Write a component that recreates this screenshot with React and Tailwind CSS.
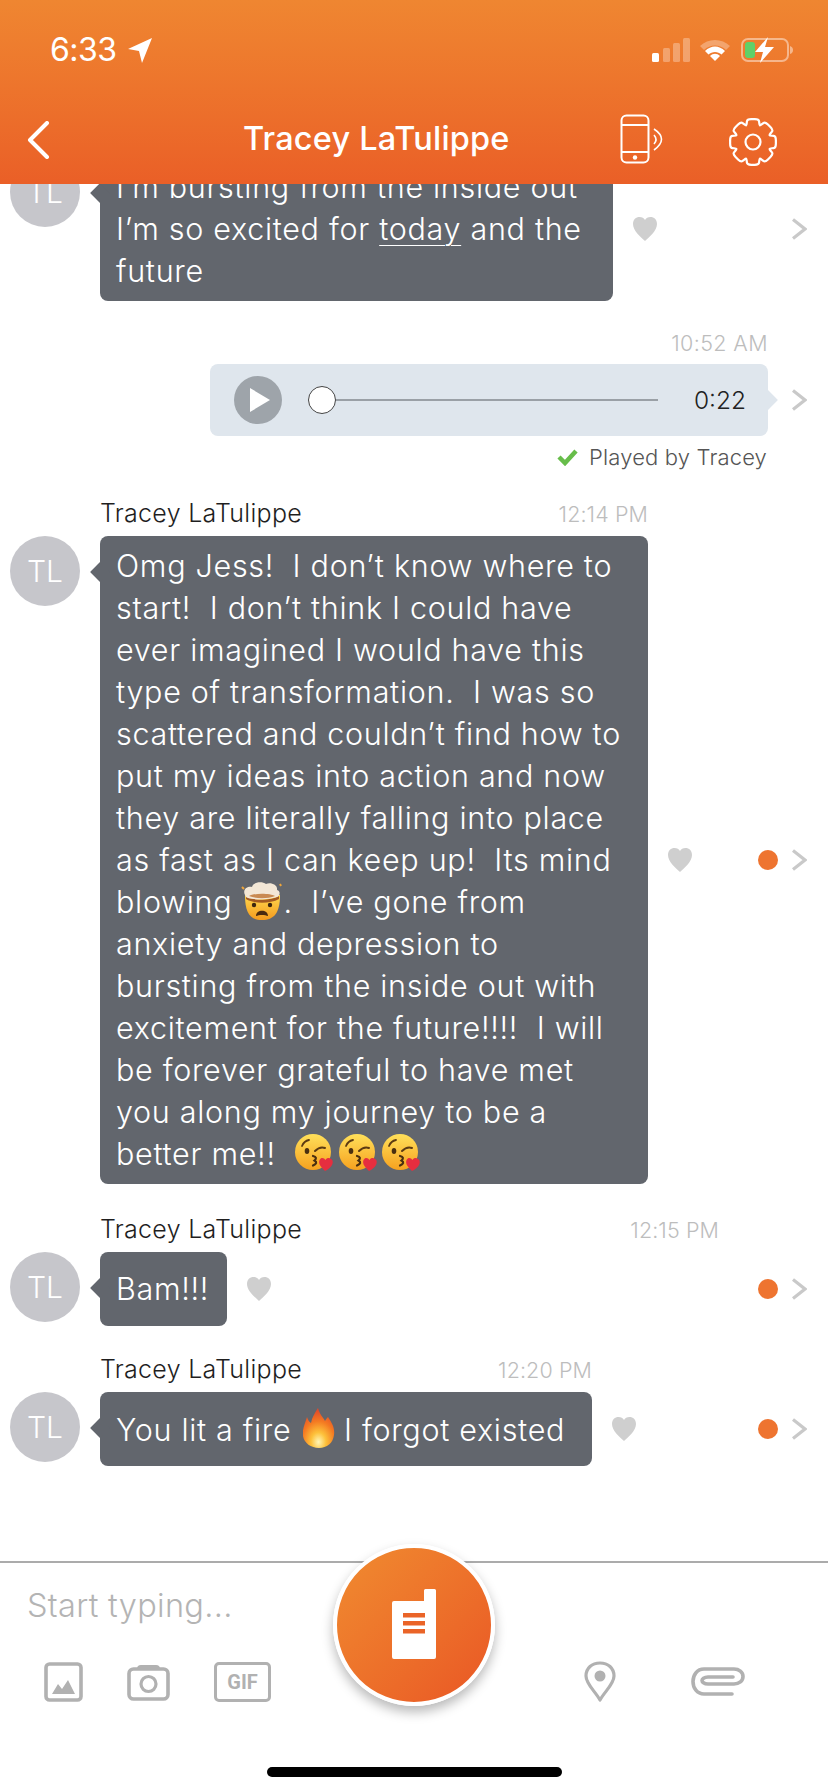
const FONT = "font-['Inter','Lato',sans-serif]";

function Chevron() {
  return (
    <svg width="16" height="22" viewBox="0 0 16 22" className="shrink-0">
      <path d="M2 1.5 L14 11 L2 20.5" fill="none" stroke="#c9c9c9" strokeWidth="3.2" />
    </svg>
  );
}

function Heart() {
  return (
    <svg width="24" height="24" viewBox="0 0 24 24" className="shrink-0">
      <path d="M12 24 C8 20 0 14 0 7 C0 2.5 3 0 6.5 0 C9 0 11 1.2 12 3 C13 1.2 15 0 17.5 0 C21 0 24 2.5 24 7 C24 14 16 20 12 24 Z" fill="#cfcfcf" />
    </svg>
  );
}

function Avatar() {
  return (
    <div className="w-[70px] h-[70px] shrink-0 rounded-full bg-[#c6c6cb] flex items-center justify-center text-white text-[30px] font-light">
      TL
    </div>
  );
}

function KissEmoji() {
  return (
    <svg width="40" height="40" viewBox="0 0 40 40" className="inline-block align-[-8px] mr-[3.5px]">
      <defs>
        <linearGradient id="kissface" x1="0" y1="0" x2="0" y2="1">
          <stop offset="0" stopColor="#ffe05a" />
          <stop offset="1" stopColor="#f6a11f" />
        </linearGradient>
      </defs>
      <circle cx="19" cy="19" r="18" fill="url(#kissface)" />
      <path d="M8 13 q2 -5 7 -6" fill="none" stroke="#5b3a12" strokeWidth="1.800" strokeLinecap="round" />
      <ellipse cx="13" cy="18" rx="2.300" ry="3" fill="#4a2f10" />
      <path d="M21 18 q5 -5 10 -3" fill="none" stroke="#5b3a12" strokeWidth="2" strokeLinecap="round" />
      <path d="M19 23 q5 1.500 1.500 4.500 q4 2.500 -1.500 5" fill="none" stroke="#4a2f10" strokeWidth="2.200" strokeLinecap="round" />
      <path d="M31 38 C27 34 24 31 25.500 27 C27 24 30 24.500 31.500 27 C33 24 37 24.500 38.500 27.500 C40 32 35 36 31 38 Z" fill="#e62e3f" />
    </svg>
  );
}

function MindBlownEmoji() {
  return (
    <svg width="44" height="40" viewBox="0 0 44 40" className="inline-block align-[-8px] -ml-[2px]">
      <defs>
        <linearGradient id="blownface" x1="0" y1="0" x2="0" y2="1">
          <stop offset="0" stopColor="#ffd84e" />
          <stop offset="1" stopColor="#f49a1e" />
        </linearGradient>
      </defs>
      <path d="M5 14 C5 32 10 39 22 39 C34 39 40 32 40 14 Z" fill="url(#blownface)" />
      <path d="M6 15 C14 20 30 20 39 15 L39 18 C30 23 14 23 6 18 Z" fill="#a45a22" />
      <path d="M5 14 C2 8 8 5 12 6 C13 1 22 0 26 3 C31 1 38 4 37 9 C41 10 40 15 37 16 C28 19 14 19 8 17 C6 16.500 5.500 15 5 14 Z" fill="#f3e7d6" />
      <path d="M9 15 C16 18 28 18 35 15 C30 12 14 12 9 15 Z" fill="#c98a52" />
      <circle cx="14" cy="24" r="2.200" fill="#3d2610" />
      <circle cx="30" cy="24" r="2.200" fill="#3d2610" />
      <path d="M16 35 C16 28 28 28 28 35 C25 33.500 19 33.500 16 35 Z" fill="#4a2a10" />
      <path d="M2 6 l2 2 M40 3 l1 2" stroke="#f0a63a" strokeWidth="2" />
    </svg>
  );
}

function FireEmoji() {
  return (
    <svg width="32" height="40" viewBox="0 0 32 40" className="inline-block align-[-7px] ml-[2px]">
      <defs>
        <radialGradient id="firefill" cx="0.5" cy="0.85" r="0.8">
          <stop offset="0" stopColor="#fff6b8" />
          <stop offset="0.3" stopColor="#fdc13a" />
          <stop offset="0.65" stopColor="#f47a22" />
          <stop offset="1" stopColor="#e2492a" />
        </radialGradient>
      </defs>
      <path d="M15 0 C17 7 20 9 22 13 C23 11 24 10 25 9 C29 15 32 20 31 27 C30 35 24 40 16 40 C8 40 1 35 0 28 C-1 21 2 16 4 9 C5 12 6 14 8 15 C9 9 12 5 15 0 Z" fill="url(#firefill)" />
    </svg>
  );
}

function Message({ name = true, time, timeClass, width, className = '', dot = true, heartClass = 'ml-5', children, single }) {
  return (
    <div className={className}>
      {name && (
        <div className="h-[30px] mb-[7px] ml-[100px] flex items-center justify-between text-[25px] font-light tracking-[0.3px] text-[#1f1f1f]" style={{ width: timeClass }}>
          <span>Tracey LaTulippe</span>
          <span className="text-[21.5px] text-[#bdbdbd] font-light tracking-[0.1px]">{time}</span>
        </div>
      )}
      <div className="flex items-center pl-[10px] pr-[21px]">
        <div className="self-start"><Avatar /></div>
        <div
          className={`relative ml-5 shrink-0 rounded-lg bg-[#62666d] px-4 py-[9px] text-[30.5px] leading-[42px] font-light tracking-[0.7px] text-white whitespace-pre ${single ? 'min-h-[74px] flex items-center' : ''}`}
          style={{ width }}
        >
          <div className="absolute -left-[7px] top-[29px] w-[14px] h-[14px] rotate-45 bg-[#62666d]" />
          <div className="relative">{children}</div>
        </div>
        <div className={heartClass}><Heart /></div>
        <div className="ml-auto flex items-center gap-[13px]">
          {dot && <div className="w-5 h-5 rounded-full bg-[#ee7430]" />}
          <Chevron />
        </div>
      </div>
    </div>
  );
}

// gear outline: eight teeth with the corners rounded off
function gearPath() {
  const c = 25;
  const pts = [];
  for (let i = 0; i < 8; i++) {
    const a = (i * Math.PI) / 4 - Math.PI / 2;
    [[18, -0.37], [23.6, -0.25], [23.6, 0.25], [18, 0.37]].forEach(([r, d]) => {
      pts.push([c + r * Math.cos(a + d), c + r * Math.sin(a + d)]);
    });
  }
  const mix = (p, q, t) => `${(p[0] + (q[0] - p[0]) * t).toFixed(2)} ${(p[1] + (q[1] - p[1]) * t).toFixed(2)}`;
  let d = '';
  pts.forEach((p, i) => {
    const prev = pts[(i + pts.length - 1) % pts.length];
    const next = pts[(i + 1) % pts.length];
    d += `${i === 0 ? 'M' : 'L'}${mix(p, prev, 0.35)} Q${p[0].toFixed(2)} ${p[1].toFixed(2)} ${mix(p, next, 0.35)} `;
  });
  return d + 'Z';
}

function StatusBar() {
  return (
    <div className="h-[100px] pt-[30px] flex items-start pl-[50px] pr-[34px]">
      <span className="text-[32px] leading-[40px] font-normal text-white tracking-[-0.5px]">6:33</span>
      <svg width="24" height="25" viewBox="0 0 24 25" className="ml-[11px] mt-[8px]">
        <path d="M24 0 L14 25 L11 13 L0 11 Z" fill="#fff" />
      </svg>
      <div className="ml-auto mt-[8px] flex items-start">
        <svg width="38" height="24" viewBox="0 0 38 24">
          <rect x="0" y="15" width="7" height="9" rx="1.5" fill="#fff" />
          <rect x="11" y="10" width="7" height="14" rx="1.5" fill="#fff" opacity="0.3" />
          <rect x="21" y="5" width="7" height="19" rx="1.5" fill="#fff" opacity="0.3" />
          <rect x="31" y="0" width="7" height="24" rx="1.5" fill="#fff" opacity="0.3" />
        </svg>
        <svg width="32" height="24" viewBox="0 0 32 24" className="ml-[9px]">
          <path d="M1 8 C9 0 23 0 31 8 L27 12 C21 6 11 6 5 12 Z" fill="#fff" opacity="0.3" />
          <path d="M6 13 C12 7 20 7 26 13 L22.5 16.5 C19 13 13 13 9.500 16.5 Z" fill="#fff" />
          <path d="M11 18 C14 15 18 15 21 18 L16 23 Z" fill="#fff" />
        </svg>
        <svg width="53" height="26" viewBox="0 0 53 26" className="ml-[10px] -mt-px">
          <rect x="1" y="2" width="46" height="22" rx="6" fill="none" stroke="#fff" strokeWidth="2" opacity="0.45" />
          <rect x="4" y="5" width="10" height="16" rx="3" fill="#5fd068" />
          <path d="M49 9 q3 1 3 4 q0 3 -3 4 Z" fill="#fff" opacity="0.45" />
          <path d="M27 0 L14 15 L22 15 L19 26 L33 10 L24 10 Z" fill="#fff" />
        </svg>
      </div>
    </div>
  );
}

function NavBar() {
  return (
    <div className="relative h-[84px] flex items-start">
      <svg width="24" height="38" viewBox="0 0 24 38" className="ml-[26px] mt-[21px]">
        <path d="M21 2 L4 19 L21 36" fill="none" stroke="#fff" strokeWidth="4" strokeLinecap="round" strokeLinejoin="round" />
      </svg>
      <div className="absolute left-[243px] top-[17px] text-[32.5px] leading-[44px] font-medium tracking-[0.2px] text-white">
        Tracey LaTulippe
      </div>
      <svg width="46" height="50" viewBox="0 0 46 50" className="ml-[570px] mt-[14px] shrink-0">
        <rect x="1.500" y="1.500" width="27" height="47" rx="5" fill="none" stroke="#fff" strokeWidth="2" />
        <path d="M1.500 11 H28.500 M1.500 38 H28.500" stroke="#fff" strokeWidth="2" />
        <circle cx="15" cy="43.500" r="2.200" fill="#fff" />
        <path d="M34 21 q4 4.500 0 9" fill="none" stroke="#fff" strokeWidth="1.600" />
        <path d="M34 15 q15 10 0 21" fill="none" stroke="#fff" strokeWidth="1.600" />
      </svg>
      <svg width="50" height="50" viewBox="0 0 50 50" className="ml-[62px] mt-[17px] shrink-0">
        <path d={gearPath()} fill="none" stroke="#fff" strokeWidth="2.200" />
        <circle cx="25" cy="25" r="7.500" fill="none" stroke="#fff" strokeWidth="2.200" />
      </svg>
    </div>
  );
}

function AudioMessage() {
  return (
    <div className="mt-[27px] pr-[21px]">
      <div className="h-[30px] mr-[39px] flex items-center justify-end text-[21.5px] tracking-[0.4px] font-light text-[#bdbdbd]">10:52 AM</div>
      <div className="mt-[6px] flex items-center justify-end">
        <div className="relative w-[558px] h-[72px] rounded-lg bg-[#dfe6ed] flex items-center pl-[24px] pr-[22px]">
          <div className="absolute -right-[7px] top-[29px] w-[14px] h-[14px] rotate-45 bg-[#dfe6ed]" />
          <div className="w-12 h-12 rounded-full bg-[#9ea4aa] flex items-center justify-center">
            <svg width="20" height="24" viewBox="0 0 20 24" className="ml-[3px]">
              <path d="M0 0 L20 12 L0 24 Z" fill="#fff" />
            </svg>
          </div>
          <div className="ml-[26px] flex-1 flex items-center">
            <div className="w-7 h-7 shrink-0 rounded-full bg-white border border-[#444]" />
            <div className="w-[322px] h-[2px] bg-[#9aa0a6]" />
          </div>
          <span className="relative text-[24.5px] font-light text-[#222]">0:22</span>
        </div>
        <div className="ml-[23px]"><Chevron /></div>
      </div>
      <div className="mt-[6px] mr-[40px] h-[30px] flex items-center justify-end text-[22px] tracking-[0.15px] font-light text-[#555]">
        <svg width="21" height="18" viewBox="0 0 21 18" className="mr-[11px]">
          <path d="M2 9 L8 15 L19 3" fill="none" stroke="#67bd4a" strokeWidth="4.500" />
        </svg>
        Played by Tracey
      </div>
    </div>
  );
}

function Composer() {
  return (
    <div className="relative h-[231px] shrink-0 border-t-2 border-[#ababab] bg-white">
      <div className="mt-[23px] ml-[27px] h-10 flex items-center text-[32.5px] tracking-[0.3px] font-light text-[#b4b4b4]">Start typing...</div>
      <div className="mt-[35px] h-[42px] flex items-center">
        <svg width="39" height="40" viewBox="0 0 39 40" className="ml-[44px]">
          <rect x="2" y="2" width="35" height="36" rx="3.500" fill="none" stroke="#b1b1b1" strokeWidth="3.600" />
          <path d="M8 32 L14 22 L18 27 L24 18 L31 32 Z" fill="#b1b1b1" />
        </svg>
        <svg width="43" height="37" viewBox="0 0 43 37" className="ml-[44px]">
          <rect x="2" y="5" width="39" height="30" rx="4.500" fill="none" stroke="#b1b1b1" strokeWidth="3.600" />
          <path d="M10 5 Q10 1 14 1 H29 Q33 1 33 5 Z" fill="#b1b1b1" />
          <circle cx="21.500" cy="20" r="7.500" fill="none" stroke="#b1b1b1" strokeWidth="3.200" />
        </svg>
        <div className="ml-[44px] w-[57px] h-[40px] rounded-[5px] border-[3.500px] border-[#b1b1b1] flex items-center justify-center text-[20px] font-bold text-[#b1b1b1] font-['Roboto',sans-serif]">
          GIF
        </div>
        <svg width="32" height="42" viewBox="0 0 32 42" className="ml-[313px]">
          <path d="M16 39 C11 30 2 23 2 15 C2 7 8 2 16 2 C24 2 30 7 30 15 C30 23 21 30 16 39 Z" fill="none" stroke="#b1b1b1" strokeWidth="3.200" strokeLinejoin="round" />
          <circle cx="16" cy="15" r="5.500" fill="#b1b1b1" />
        </svg>
        <svg width="54" height="30" viewBox="0 0 54 30" className="ml-[75px]">
          <path d="M41 27 H13 C6 27 2 21 2 14.500 C2 8 6 2 13 2 H43 C48 2 52 5 52 9.500 C52 14 48 17 43 17 H17 C13 17 11 15 11 13.500 C11 12 13 10 17 10 H42" fill="none" stroke="#b1b1b1" strokeWidth="3.600" strokeLinecap="round" />
        </svg>
      </div>
      <div className="mt-[64px] mx-auto w-[295px] h-[10px] rounded-full bg-black" />

      <div className="absolute left-[333px] -top-[19px] w-[162px] h-[162px] rounded-full border-[4px] border-white bg-gradient-to-br from-[#f08b30] to-[#e95625] shadow-[0_6px_12px_rgba(0,0,0,0.28)] flex items-center justify-center">
        <svg width="44" height="70" viewBox="0 0 44 70" className="-mt-[2px]">
          <path d="M32 1.500 Q32 0 33.500 0 H42.500 Q44 0 44 1.500 V68 Q44 70 42 70 H2 Q0 70 0 68 V14 Q0 12 2 12 H32 Z" fill="#fff" />
          <rect x="11" y="24" width="22" height="4.500" fill="#ea6428" />
          <rect x="11" y="32" width="22" height="4.500" fill="#ea6428" />
          <rect x="11" y="40" width="22" height="4.500" fill="#ea6428" />
        </svg>
      </div>
    </div>
  );
}

export default function App() {
  return (
    <div className={`w-[828px] h-[1792px] flex flex-col overflow-hidden bg-white ${FONT}`}>
      <header className="relative z-10 h-[184px] shrink-0 bg-gradient-to-b from-[#ef8631] to-[#ea5f27]">
        <StatusBar />
        <NavBar />
      </header>

      <main className="flex-1 overflow-hidden">
        <div className="-mt-[27px]">
          <Message name={false} width="513px" dot={false}>
            <div>I’m bursting from the inside out</div>
            <div>I’m so excited for <span className="underline underline-offset-[5px] decoration-1">today</span> and the</div>
            <div>future</div>
          </Message>

          <AudioMessage />

          <Message className="mt-[27px]" time="12:14 PM" timeClass="548px" width="548px">
            <div>Omg Jess!  I don’t know where to</div>
            <div>start!  I don’t think I could have</div>
            <div>ever imagined I would have this</div>
            <div>type of transformation.  I was so</div>
            <div>scattered and couldn’t find how to</div>
            <div>put my ideas into action and now</div>
            <div>they are literally falling into place</div>
            <div>as fast as I can keep up!  Its mind</div>
            <div>blowing <MindBlownEmoji />.  I’ve gone from</div>
            <div>anxiety and depression to</div>
            <div>bursting from the inside out with</div>
            <div>excitement for the future!!!!  I will</div>
            <div>be forever grateful to have met</div>
            <div>you along my journey to be a</div>
            <div>better me!!  <KissEmoji /><KissEmoji /><KissEmoji /></div>
          </Message>

          <Message className="mt-[31px]" time="12:15 PM" timeClass="619px" width="127px" single>
            Bam!!!
          </Message>

          <Message className="mt-[29px]" time="12:20 PM" timeClass="492px" width="492px" single>
            You lit a fire <FireEmoji /> I forgot existed
          </Message>
        </div>
      </main>

      <Composer />
    </div>
  );
}
